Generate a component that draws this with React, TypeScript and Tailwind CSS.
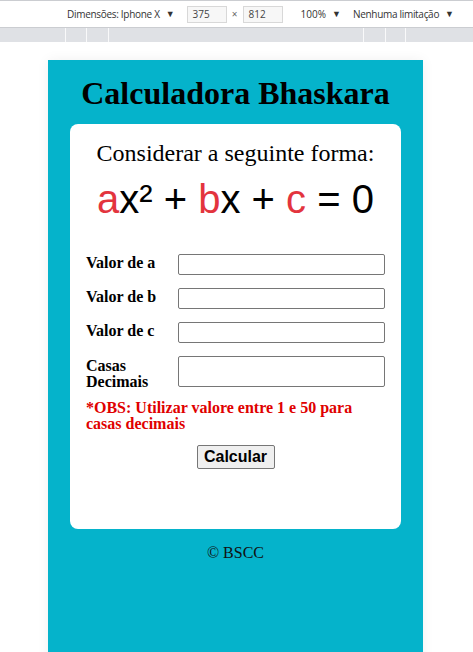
export default function App() {
  const rows = [
    { label: "Valor de a", tall: false },
    { label: "Valor de b", tall: false },
    { label: "Valor de c", tall: false },
  ];

  return (
    <div className="w-[473px] h-[652px] overflow-hidden bg-white relative">
      {/* devtools toolbar */}
      <div className="h-[28px] border-t border-b border-[#cbcdd1] bg-white flex items-center whitespace-nowrap text-[10px] text-[#333] font-['Open_Sans',sans-serif]">
        <span className="ml-[67px] shrink-0 tracking-[-0.3px]">Dimensões: Iphone X</span>
        <span className="ml-[6px] shrink-0 text-[9px]">▼</span>
        <div className="ml-[12px] w-[40px] shrink-0 h-[17px] border border-[#d8d8d8] bg-[#f7f7f7] pl-[5px] leading-[15px] text-[#444]">375</div>
        <span className="w-[16px] shrink-0 text-center text-[#666]">×</span>
        <div className="w-[40px] shrink-0 h-[17px] border border-[#d8d8d8] bg-[#f7f7f7] pl-[5px] leading-[15px] text-[#444]">812</div>
        <span className="ml-[18px] shrink-0">100%</span>
        <span className="ml-[6px] shrink-0 text-[9px]">▼</span>
        <span className="ml-[12px] shrink-0 tracking-[-0.3px]">Nenhuma limitação</span>
        <span className="ml-[6px] shrink-0 text-[9px]">▼</span>
      </div>
      {/* ruler */}
      <div className="h-[14px] bg-[#dfe1e5] flex">
        <div className="ml-[65px] w-px bg-white/80" />
        <div className="ml-[20px] w-px bg-white/80" />
        <div className="ml-[21px] w-px bg-white/80" />
        <div className="ml-[254px] w-px bg-white/80" />
        <div className="ml-[21px] w-px bg-white/80" />
        <div className="ml-[19px] w-px bg-white/80" />
      </div>

      {/* device viewport */}
      <div className="ml-[48px] mt-[18px] w-[375px] h-[700px] bg-[#05b3cb] shadow-[0_0_12px_rgba(0,0,0,0.06)] font-['Liberation_Serif',serif] text-black">
        <h1 className="text-center text-[32px] font-bold leading-[37px] pt-[15px]">
          Calculadora Bhaskara
        </h1>
        <div className="mx-[22px] mt-[12px] h-[405px] bg-white rounded-[8px] px-[16px]">
          <p className="text-center text-[24px] leading-[28px] pt-[15px]">
            Considerar a seguinte forma:
          </p>
          <p className="text-center text-[40px] leading-[46px] mt-[9px] font-['Liberation_Sans',Arial,sans-serif]">
            <span className="text-[#e3343e]">a</span>x² + <span className="text-[#e3343e]">b</span>x +{" "}
            <span className="text-[#e3343e]">c</span> = 0
          </p>

          <div className="mt-[32px] flex flex-col gap-[13px]">
            {rows.map((r) => (
              <div key={r.label} className="flex items-start">
                <label className="w-[92px] text-[16px] font-bold leading-[18px]">{r.label}</label>
                <input className="w-[208px] h-[21px] border border-[#767676] rounded-[2px] bg-white" />
              </div>
            ))}
            <div className="flex items-start">
              <label className="w-[92px] text-[16px] font-bold leading-[16px] pt-[2px]">
                Casas
                <br />
                Decimais
              </label>
              <input className="w-[208px] h-[31px] border border-[#767676] rounded-[2px] bg-white" />
            </div>
          </div>

          <p className="mt-[10px] text-[16px] font-bold leading-[16px] text-[#e00000]">
            *OBS: Utilizar valore entre 1 e 50 para casas decimais
          </p>

          <div className="flex justify-center mt-[13px]">
            <button className="w-[78px] h-[24px] border border-[#767676] rounded-[2px] bg-[#efefef] text-[16px] font-bold font-['Liberation_Sans',Arial,sans-serif] leading-[20px]">
              Calcular
            </button>
          </div>
        </div>
        <p className="text-center text-[16px] mt-[15px] leading-[18px] text-[#111]">© BSCC</p>
      </div>
    </div>
  );
}
